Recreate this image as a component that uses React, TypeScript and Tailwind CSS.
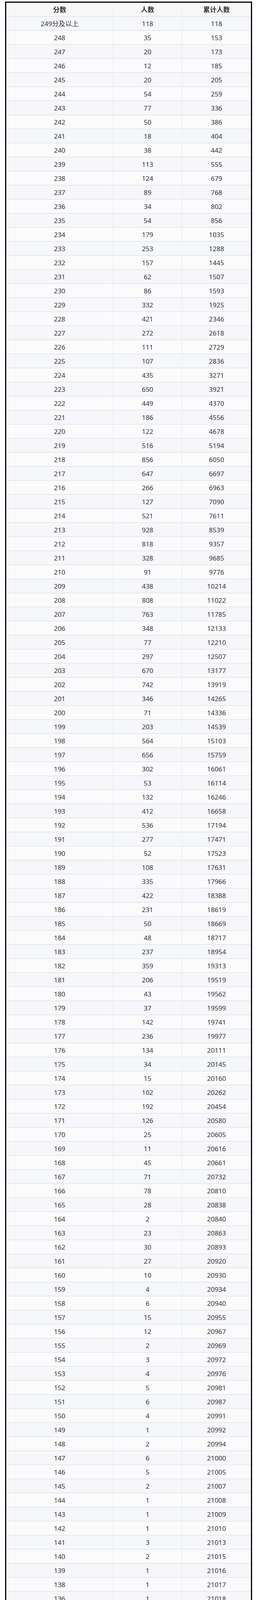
import React from 'react'

// [score, count, cumulative]
const rows: [string, number, number][] = [
    ['249分及以上', 118, 118],
    ['248', 35, 153],
    ['247', 20, 173],
    ['246', 12, 185],
    ['245', 20, 205],
    ['244', 54, 259],
    ['243', 77, 336],
    ['242', 50, 386],
    ['241', 18, 404],
    ['240', 38, 442],
    ['239', 113, 555],
    ['238', 124, 679],
    ['237', 89, 768],
    ['236', 34, 802],
    ['235', 54, 856],
    ['234', 179, 1035],
    ['233', 253, 1288],
    ['232', 157, 1445],
    ['231', 62, 1507],
    ['230', 86, 1593],
    ['229', 332, 1925],
    ['228', 421, 2346],
    ['227', 272, 2618],
    ['226', 111, 2729],
    ['225', 107, 2836],
    ['224', 435, 3271],
    ['223', 650, 3921],
    ['222', 449, 4370],
    ['221', 186, 4556],
    ['220', 122, 4678],
    ['219', 516, 5194],
    ['218', 856, 6050],
    ['217', 647, 6697],
    ['216', 266, 6963],
    ['215', 127, 7090],
    ['214', 521, 7611],
    ['213', 928, 8539],
    ['212', 818, 9357],
    ['211', 328, 9685],
    ['210', 91, 9776],
    ['209', 438, 10214],
    ['208', 808, 11022],
    ['207', 763, 11785],
    ['206', 348, 12133],
    ['205', 77, 12210],
    ['204', 297, 12507],
    ['203', 670, 13177],
    ['202', 742, 13919],
    ['201', 346, 14265],
    ['200', 71, 14336],
    ['199', 203, 14539],
    ['198', 564, 15103],
    ['197', 656, 15759],
    ['196', 302, 16061],
    ['195', 53, 16114],
    ['194', 132, 16246],
    ['193', 412, 16658],
    ['192', 536, 17194],
    ['191', 277, 17471],
    ['190', 52, 17523],
    ['189', 108, 17631],
    ['188', 335, 17966],
    ['187', 422, 18388],
    ['186', 231, 18619],
    ['185', 50, 18669],
    ['184', 48, 18717],
    ['183', 237, 18954],
    ['182', 359, 19313],
    ['181', 206, 19519],
    ['180', 43, 19562],
    ['179', 37, 19599],
    ['178', 142, 19741],
    ['177', 236, 19977],
    ['176', 134, 20111],
    ['175', 34, 20145],
    ['174', 15, 20160],
    ['173', 102, 20262],
    ['172', 192, 20454],
    ['171', 126, 20580],
    ['170', 25, 20605],
    ['169', 11, 20616],
    ['168', 45, 20661],
    ['167', 71, 20732],
    ['166', 78, 20810],
    ['165', 28, 20838],
    ['164', 2, 20840],
    ['163', 23, 20863],
    ['162', 30, 20893],
    ['161', 27, 20920],
    ['160', 10, 20930],
    ['159', 4, 20934],
    ['158', 6, 20940],
    ['157', 15, 20955],
    ['156', 12, 20967],
    ['155', 2, 20969],
    ['154', 3, 20972],
    ['153', 4, 20976],
    ['152', 5, 20981],
    ['151', 6, 20987],
    ['150', 4, 20991],
    ['149', 1, 20992],
    ['148', 2, 20994],
    ['147', 6, 21000],
    ['146', 5, 21005],
    ['145', 2, 21007],
    ['144', 1, 21008],
    ['143', 1, 21009],
    ['142', 1, 21010],
    ['141', 3, 21013],
    ['140', 2, 21015],
    ['139', 1, 21016],
    ['138', 1, 21017],
    ['136', 1, 21018],
    ['135', 1, 21019],
    ['134', 2, 21021],
    ['133', 1, 21022],
    ['132', 2, 21024],
    ['131', 2, 21026],
    ['130', 1, 21027],
    ['127', 1, 21028],
    ['126', 1, 21029],
    ['125', 1, 21030],
    ['122', 1, 21031],
    ['119', 3, 21034],
    ['117', 1, 21035],
    ['116', 1, 21036],
    ['115', 1, 21037],
    ['114', 2, 21039],
    ['103', 1, 21040],
    ['81', 1, 21041],
    ['77', 2, 21043],
    ['52', 2, 21045],
    ['36', 1, 21046],
    ['0', 79, 21125],
]

const cell = 'flex items-center justify-center'

const App = () => {
    return (
        <div className="bg-white pt-[4px] pl-[13px] text-[#333] font-['Noto_Sans','Noto_Sans_CJK_SC',sans-serif]">
            <div className="w-[632px] border-[3px] border-black text-[17px] leading-none">
                <div className="grid grid-cols-[274px_176px_1fr] h-[36px] bg-[#f8f8f9] border-b-2 border-[#e5e8ec] font-bold">
                    <div className={cell + ' border-r border-[#e8eaed]'}>分数</div>
                    <div className={cell + ' border-r border-[#e8eaed]'}>人数</div>
                    <div className={cell}>累计人数</div>
                </div>
                {rows.map(([score, count, total], i) => (
                    <div
                        key={score}
                        className={
                            'grid grid-cols-[274px_176px_1fr] h-[36px] ' +
                            (i % 2 === 0 ? 'bg-[#f5f7fb] ' : 'bg-[#fbfbfc] ') +
                            (i === rows.length - 1 ? '' : 'border-b-2 border-[#e5e8ec]')
                        }
                    >
                        <div className={cell + ' border-r border-[#e8eaed]'}>{score}</div>
                        <div className={cell + ' border-r border-[#e8eaed]'}>{count}</div>
                        <div className={cell}>{total}</div>
                    </div>
                ))}
            </div>
        </div>
    )
}

export default App
